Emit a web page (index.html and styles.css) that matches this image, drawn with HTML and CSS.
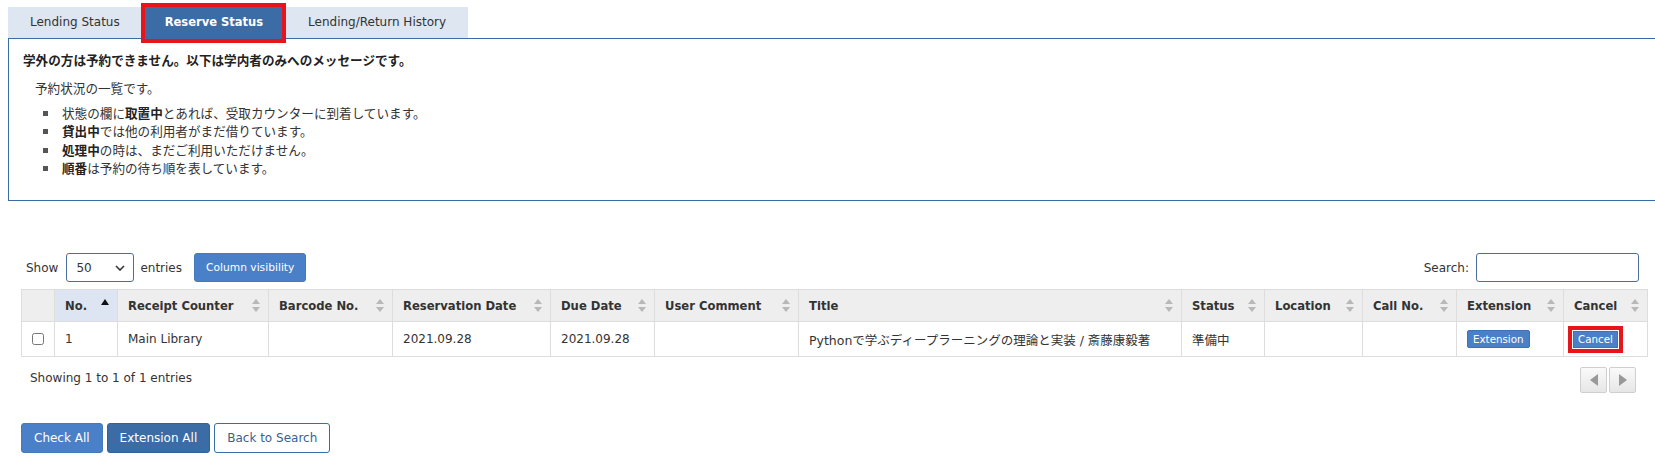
FILE: index.html
```html
<!DOCTYPE html>
<html lang="en">
<head>
    <meta charset="UTF-8">
    <title>Reserve Status</title>
    <link rel="stylesheet" href="styles.css">
</head>
<body>
    <!-- Tabs -->
    <ul class="tabs">
        <li class="tab">Lending Status</li>
        <li class="tab active">Reserve Status</li>
        <li class="tab">Lending/Return History</li>
    </ul>

    <!-- Notice panel -->
    <div class="panel">
        <p class="notice">学外の方は予約できません。以下は学内者のみへのメッセージです。</p>
        <p class="intro">予約状況の一覧です。</p>
        <ul class="notes">
            <li>状態の欄に<b>取置中</b>とあれば、受取カウンターに到着しています。</li>
            <li><b>貸出中</b>では他の利用者がまだ借りています。</li>
            <li><b>処理中</b>の時は、まだご利用いただけません。</li>
            <li><b>順番</b>は予約の待ち順を表しています。</li>
        </ul>
    </div>

    <div class="list">
        <div class="toolbar">
            <div class="length">
                <label>Show</label>
                <span class="select-wrap">
                    <select><option>50</option></select>
                    <svg class="chevron" width="10" height="6" viewBox="0 0 10 6"><path d="M1 1l4 4 4-4" fill="none" stroke="#333" stroke-width="1.6"/></svg>
                </span>
                <label>entries</label>
                <button class="btn btn-small">Column visibility</button>
            </div>
            <div class="filter">
                <label>Search:</label>
                <input type="text">
            </div>
        </div>

        <table class="grid">
            <colgroup>
                <col style="width:33px"><col style="width:63px"><col style="width:151px"><col style="width:124px">
                <col style="width:158px"><col style="width:104px"><col style="width:144px"><col style="width:383px">
                <col style="width:83px"><col style="width:98px"><col style="width:94px"><col style="width:107px"><col style="width:84px">
            </colgroup>
            <thead>
                <tr>
                    <th></th>
                    <th class="sorted">No.</th>
                    <th class="sortable">Receipt Counter</th>
                    <th class="sortable">Barcode No.</th>
                    <th class="sortable">Reservation Date</th>
                    <th class="sortable">Due Date</th>
                    <th class="sortable">User Comment</th>
                    <th class="sortable">Title</th>
                    <th class="sortable">Status</th>
                    <th class="sortable">Location</th>
                    <th class="sortable">Call No.</th>
                    <th class="sortable">Extension</th>
                    <th class="sortable">Cancel</th>
                </tr>
            </thead>
            <tbody>
                <tr>
                    <td class="check"><input type="checkbox"></td>
                    <td>1</td>
                    <td>Main Library</td>
                    <td></td>
                    <td>2021.09.28</td>
                    <td>2021.09.28</td>
                    <td></td>
                    <td class="jp">Pythonで学ぶディープラーニングの理論と実装 / 斎藤康毅著</td>
                    <td class="jp">準備中</td>
                    <td></td>
                    <td></td>
                    <td><button class="btn btn-mini">Extension</button></td>
                    <td><button class="btn btn-mini marked">Cancel</button></td>
                </tr>
            </tbody>
        </table>

        <div class="info-row">
            <div class="info">Showing 1 to 1 of 1 entries</div>
            <div class="pager">
                <span class="page-btn"><svg width="10" height="14" viewBox="0 0 10 14"><path d="M9 1L1 7l8 6z" fill="#999"/></svg></span>
                <span class="page-btn"><svg width="10" height="14" viewBox="0 0 10 14"><path d="M1 1l8 6-8 6z" fill="#999"/></svg></span>
            </div>
        </div>

        <div class="actions">
            <button class="btn btn-primary">Check All</button>
            <button class="btn btn-dark">Extension All</button>
            <button class="btn btn-outline">Back to Search</button>
        </div>
    </div>
</body>
</html>
```

FILE: styles.css
```css
body {
    font-family: "DejaVu Sans", "Noto Sans CJK JP", sans-serif;
    font-size: 12px;
    color: #333;
    background-color: white;
    margin: 0;
    padding: 7px 0 0 8px;
    overflow: hidden;
}

/* Tabs */
.tabs {
    list-style: none;
    margin: 0;
    padding: 0;
    display: flex;
    gap: 3px;
}

.tab {
    height: 31px;
    line-height: 31px;
    padding: 0 22px;
    background-color: #dde6f1;
    color: #333;
}

.tab.active {
    position: relative;
    padding: 0 20px;
    background-color: #3b6ca6;
    color: white;
    font-weight: bold;
    font-size: 11.5px;
}

/* red marker drawn round the current tab */
.tab.active::after {
    content: "";
    position: absolute;
    top: -4px;
    left: -4px;
    right: -3px;
    bottom: -5px;
    border: 4px solid #e8141c;
}

/* Notice panel */
.panel {
    width: 1700px;
    height: 148px;
    border-top: 1px solid #3b6ca6;
    border-left: 1px solid #3b6ca6;
    border-bottom: 1px solid #3b6ca6;
    padding: 13px 0 0 14px;
    font-size: 12.6px;
    line-height: 18px;
}

.panel p {
    margin: 0;
}

.notice {
    font-weight: bold;
    color: #222;
}

.intro {
    margin-top: 10px !important;
    padding-left: 12px;
}

.notes {
    margin: 7px 0 0 0;
    padding-left: 35px;
    list-style: none;
}

.notes li {
    line-height: 18.4px;
}

.notes li::before {
    content: "";
    display: inline-block;
    vertical-align: middle;
    width: 5px;
    height: 5px;
    background-color: #555;
    margin: -2px 14px 0 -15px;
}

.notes b {
    color: #222;
}

/* Table area */
.list {
    width: 1627px;
    margin: 52px 0 0 13px;
}

.toolbar {
    display: flex;
    justify-content: space-between;
    align-items: center;
    height: 29px;
    padding-left: 5px;
}

.length {
    display: flex;
    align-items: center;
}

.select-wrap {
    position: relative;
    margin: 0 6px 0 8px;
}

.select-wrap select {
    appearance: none;
    width: 68px;
    height: 29px;
    border: 1px solid #4d6e9c;
    border-radius: 3px;
    background: white;
    padding: 0 0 0 9px;
    font-family: inherit;
    font-size: 12px;
    color: #333;
}

.chevron {
    position: absolute;
    right: 9px;
    top: 12px;
}

.btn {
    font-family: inherit;
    cursor: pointer;
    border-radius: 3px;
}

.btn-small {
    margin-left: 12px;
    height: 29px;
    padding: 0 11px;
    background-color: #4a80c8;
    border: 1px solid #4579bd;
    color: white;
    font-size: 10.7px;
}

.filter {
    display: flex;
    align-items: center;
    margin-right: 9px;
}

.filter input {
    margin-left: 7px;
    width: 163px;
    height: 29px;
    box-sizing: border-box;
    border: 1px solid #4d6e9c;
    border-radius: 3px;
}

.grid {
    margin-top: 7px;
    width: 1627px;
    table-layout: fixed;
    border-collapse: collapse;
    border: 1px solid #dddddd;
}

.grid th {
    position: relative;
    height: 31px;
    padding: 0 10px;
    text-align: left;
    background-color: #eeeeee;
    border: 1px solid #dddddd;
    font-weight: bold;
    font-size: 11.6px;
    color: #333;
}

.grid th.sorted {
    background-color: #dce5f1;
}

/* sort arrows */
.grid th.sortable::before,
.grid th.sortable::after,
.grid th.sorted::before {
    content: "";
    position: absolute;
    right: 8px;
    border-left: 4px solid transparent;
    border-right: 4px solid transparent;
}

.grid th.sortable::before {
    top: 9px;
    border-bottom: 5px solid #b8b8b8;
}

.grid th.sortable::after {
    top: 17px;
    border-top: 5px solid #b8b8b8;
}

.grid th.sorted::before {
    top: 9px;
    border-bottom: 6px solid #111;
}

.grid td {
    height: 34px;
    padding: 0 10px;
    border: 1px solid #dddddd;
    white-space: nowrap;
}

.grid td.jp {
    font-size: 12.5px;
}

.grid td.check {
    padding: 0 0 0 10px;
}

.check input {
    margin: 2px 0 0 0;
    width: 12px;
    height: 12px;
}

.btn-mini {
    height: 18px;
    padding: 0 5px;
    background-color: #4a80c8;
    border: 1px solid #3f72b5;
    border-radius: 2px;
    color: white;
    font-size: 10.3px;
}

.btn-mini.marked {
    height: 17px;
    padding: 0 4px;
    outline: 4px solid #e8141c;
    outline-offset: 1px;
    border-radius: 0;
    margin-left: -1px;
}

.info-row {
    display: flex;
    justify-content: space-between;
    align-items: center;
    margin-top: 10px;
}

.info {
    padding: 0 0 5px 9px;
}

.pager {
    display: flex;
    gap: 2px;
    margin-right: 12px;
}

.page-btn {
    display: flex;
    align-items: center;
    justify-content: center;
    width: 27px;
    height: 26px;
    box-sizing: border-box;
    border: 1px solid #cfcfcf;
    border-radius: 2px;
    background: linear-gradient(#fafafa, #e6e6e6);
}

.actions {
    display: flex;
    gap: 4px;
    margin-top: 30px;
}

.actions .btn {
    height: 30px;
    padding: 0 12px;
    font-size: 12px;
}

.btn-primary {
    background-color: #4a80c8;
    border: 1px solid #4579bd;
    color: white;
}

.btn-dark {
    background-color: #3b6ca6;
    border: 1px solid #35619a;
    color: white;
}

.btn-outline {
    background-color: white;
    border: 1px solid #3b6ca6;
    color: #3b5f8e;
}
```
